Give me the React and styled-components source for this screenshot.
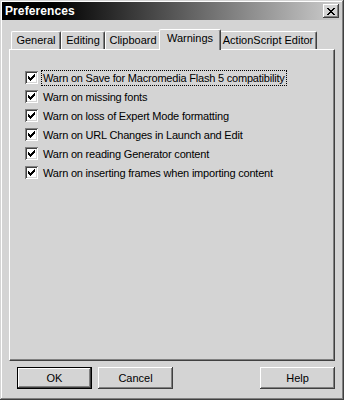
import React, { useState } from "react"
import styled, { createGlobalStyle, css } from "styled-components"

const face = `#d4d4d4`
const shadow = `#808080`
const dark = `#404040`

const GlobalStyle = createGlobalStyle`
  html, body {
    margin: 0;
    padding: 0;
    background: ${face};
  }
  body {
    font-family: "Liberation Sans", Arial, sans-serif;
    font-size: 11px;
    color: #000;
  }
`

const raised = css`
  box-shadow: inset -1px -1px ${dark}, inset 1px 1px #fff, inset -2px -2px ${shadow};
`

const Window = styled.div`
  width: 344px;
  height: 400px;
  box-sizing: border-box;
  padding: 2px;
  background: ${face};
  display: flex;
  flex-direction: column;
  box-shadow: inset -1px -1px ${dark}, inset 1px 1px ${face}, inset -2px -2px ${shadow}, inset 2px 2px #fff;
`

const TitleBar = styled.div`
  height: 18px;
  display: flex;
  align-items: center;
  justify-content: space-between;
  padding-left: 3px;
  background: linear-gradient(to right, #000 0%, #000 15%, #cfcfcf 100%);
`

const Title = styled.span`
  color: #fff;
  font-weight: bold;
  font-size: 12px;
  letter-spacing: 0.1px;
`

const CloseButton = styled.button`
  width: 16px;
  height: 14px;
  margin-right: 3px;
  padding: 0;
  border: 0;
  background: ${face};
  display: flex;
  align-items: center;
  justify-content: center;
  ${raised};
`

const Body = styled.div`
  flex: 1;
  display: flex;
  flex-direction: column;
  padding: 9px 7px 0 7px;
`

const TabRow = styled.div`
  height: 20px;
  display: flex;
  align-items: flex-end;
  padding-left: 2px;
`

const Tab = styled.div`
  position: relative;
  box-sizing: border-box;
  width: ${p => p.$w}px;
  height: 18px;
  padding-top: 2px;
  text-align: center;
  white-space: nowrap;
  border-left: 1px solid #fff;
  border-top: 1px solid #fff;
  border-right: 1px solid ${dark};
  border-radius: 2px 2px 0 0;
  box-shadow: inset -1px 0 ${shadow};
  background: ${face};
  ${p => p.$active && css`
    z-index: 1;
    width: ${p.$w + 4}px;
    height: 21px;
    margin: 0 -2px -1px -2px;
    padding-top: 2px;
  `}
`

const Panel = styled.div`
  height: 312px;
  box-sizing: border-box;
  border-top: 1px solid #fff;
  border-left: 1px solid #fff;
  border-right: 1px solid ${dark};
  border-bottom: 1px solid ${dark};
  box-shadow: inset -1px -1px ${shadow};
  padding: 21px 0 0 15px;
  display: flex;
  flex-direction: column;
`

const Row = styled.label`
  height: 19px;
  display: flex;
  align-items: flex-start;
  gap: 3px;
`

const Box = styled.span`
  width: 13px;
  height: 13px;
  box-sizing: border-box;
  padding: 2px;
  background: #fff;
  box-shadow: inset 1px 1px ${shadow}, inset -1px -1px #fff, inset 2px 2px ${dark}, inset -2px -2px ${face};
  display: block;
  flex: none;
`

const Label = styled.span`
  line-height: 13px;
  padding: 1px 1px 0 1px;
  margin-top: -1px;
  border: 1px dotted ${p => (p.$focus ? `#000` : `transparent`)};
  letter-spacing: -0.2px;
  white-space: nowrap;
`

const ButtonRow = styled.div`
  display: flex;
  gap: 6px;
  margin: 6px 0 0 8px;
`

const Button = styled.button`
  width: 75px;
  height: 22px;
  padding: 0;
  border: 0;
  background: ${face};
  font-family: "Liberation Sans", Arial, sans-serif;
  font-size: 11px;
  color: #000;
  ${raised};
  ${p => p.$default && css`
    box-shadow: inset 0 0 0 1px #000, inset -2px -2px ${dark}, inset 2px 2px #fff, inset -3px -3px ${shadow};
  `}
  ${p => p.$push && css`
    margin-left: auto;
  `}
`

const CloseIcon = () => (
  <svg width="8" height="7" viewBox="0 0 8 7" shapeRendering="crispEdges">
    <path d="M0 0h2v1h-2zM6 0h2v1h-2zM1 1h2v1h-2zM5 1h2v1h-2zM2 2h4v1h-4zM3 3h2v1h-2zM2 4h4v1h-4zM1 5h2v1h-2zM5 5h2v1h-2zM0 6h2v1h-2zM6 6h2v1h-2z" fill="#000" />
  </svg>
)

const Check = () => (
  <svg width="9" height="9" viewBox="0 0 9 9" shapeRendering="crispEdges" style={{ display: "block" }}>
    <path d="M1 3h1v3h-1zM2 4h1v3h-1zM3 5h1v3h-1zM4 4h1v3h-1zM5 3h1v3h-1zM6 2h1v3h-1zM7 1h1v3h-1z" fill="#000" />
  </svg>
)

const tabs = [
  { name: `General`, w: 50 },
  { name: `Editing`, w: 44 },
  { name: `Clipboard`, w: 56 },
  { name: `Warnings`, w: 58 },
  { name: `ActionScript Editor`, w: 98 },
]

const warnings = [
  `Warn on Save for Macromedia Flash 5 compatibility`,
  `Warn on missing fonts`,
  `Warn on loss of Expert Mode formatting`,
  `Warn on URL Changes in Launch and Edit`,
  `Warn on reading Generator content`,
  `Warn on inserting frames when importing content`,
]

export default function App() {
  const [active, setActive] = useState(`Warnings`)
  const [checked, setChecked] = useState(warnings.map(() => true))
  const toggle = i => setChecked(checked.map((c, j) => (i === j ? !c : c)))
  return (
    <>
      <GlobalStyle />
      <Window>
        <TitleBar>
          <Title>Preferences</Title>
          <CloseButton><CloseIcon /></CloseButton>
        </TitleBar>
        <Body>
          <TabRow>
            {tabs.map(t => (
              <Tab key={t.name} $w={t.w} $active={t.name === active} onClick={() => setActive(t.name)}>
                {t.name}
              </Tab>
            ))}
          </TabRow>
          <Panel>
            {warnings.map((text, i) => (
              <Row key={text} onClick={() => toggle(i)}>
                <Box>{checked[i] && <Check />}</Box>
                <Label $focus={i === 0}>{text}</Label>
              </Row>
            ))}
          </Panel>
          <ButtonRow>
            <Button $default>OK</Button>
            <Button>Cancel</Button>
            <Button $push>Help</Button>
          </ButtonRow>
        </Body>
      </Window>
    </>
  )
}
